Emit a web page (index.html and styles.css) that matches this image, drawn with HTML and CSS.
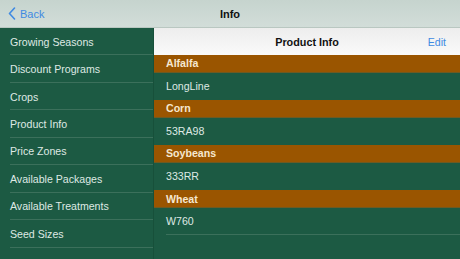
FILE: index.html
```html
<!DOCTYPE html>
<html>
<head>
<meta charset="utf-8">
<link rel="stylesheet" href="styles.css">
</head>
<body>
<div class="app">
  <header class="nav">
    <a class="back">
      <svg class="chev" width="8" height="13" viewBox="0 0 8 13"><path d="M6.5 1 L1.5 6.5 L6.5 12" fill="none" stroke="#3f8ae2" stroke-width="1.6" stroke-linecap="round" stroke-linejoin="round"/></svg>
      <span>Back</span>
    </a>
    <div class="nav-title">Info</div>
  </header>
  <div class="main">
    <nav class="sidebar">
      <div class="side-row">Growing Seasons</div>
      <div class="side-row">Discount Programs</div>
      <div class="side-row">Crops</div>
      <div class="side-row">Product Info</div>
      <div class="side-row">Price Zones</div>
      <div class="side-row">Available Packages</div>
      <div class="side-row">Available Treatments</div>
      <div class="side-row">Seed Sizes</div>
    </nav>
    <section class="detail">
      <div class="detail-head">
        <div class="detail-title">Product Info</div>
        <a class="edit">Edit</a>
      </div>
      <div class="sec-head">Alfalfa</div>
      <div class="row">LongLine</div>
      <div class="sec-head">Corn</div>
      <div class="row">53RA98</div>
      <div class="sec-head">Soybeans</div>
      <div class="row">333RR</div>
      <div class="sec-head">Wheat</div>
      <div class="row last">W760</div>
    </section>
  </div>
</div>
</body>
</html>
```
FILE: styles.css
```css
html, body {
  margin: 0;
  padding: 0;
}
body {
  width: 460px;
  height: 259px;
  overflow: hidden;
  font-family: "Liberation Sans", Arial, sans-serif;
  background: #1c5a43;
}
.app {
  display: flex;
  flex-direction: column;
  height: 259px;
}
.nav {
  height: 28px;
  flex: none;
  position: relative;
  display: flex;
  align-items: center;
  background: linear-gradient(#c6d4ce, #d2ddd9);
  box-sizing: border-box;
  border-bottom: 1px solid #b9c7c1;
}
.back {
  display: flex;
  align-items: center;
  gap: 4px;
  padding-left: 8px;
  color: #3f8ae2;
  font-size: 11px;
}
.chev {
  display: block;
}
.nav-title {
  position: absolute;
  left: 0;
  right: 0;
  text-align: center;
  font-weight: bold;
  font-size: 11px;
  color: #111;
  pointer-events: none;
}
.main {
  flex: 1;
  display: flex;
  min-height: 0;
}
.sidebar {
  width: 153px;
  flex: none;
  background: #1c5a43;
  border-right: 1px solid #17503a;
  display: flex;
  flex-direction: column;
}
.side-row {
  height: 27.45px;
  box-sizing: border-box;
  margin-left: 10px;
  border-bottom: 1px solid #3b705b;
  display: flex;
  align-items: center;
  padding-top: 1px;
  color: #dfe9e4;
  font-size: 10.6px;
}
.detail {
  flex: 1;
  background: #1c5a43;
  display: flex;
  flex-direction: column;
}
.detail-head {
  height: 27px;
  flex: none;
  position: relative;
  display: flex;
  align-items: center;
  justify-content: flex-end;
  background: linear-gradient(#ededed, #fafafa);
  padding-right: 14px;
}
.detail-title {
  position: absolute;
  left: 0;
  right: 0;
  text-align: center;
  font-weight: bold;
  font-size: 10.8px;
  color: #111;
}
.edit {
  position: relative;
  color: #3f8ae2;
  font-size: 10.6px;
}
.sec-head {
  height: 17.5px;
  flex: none;
  box-sizing: border-box;
  background: #9a5500;
  border-bottom: 1px solid #6e5a22;
  display: flex;
  align-items: center;
  padding-left: 12px;
  font-weight: bold;
  font-size: 10.6px;
  color: #f6e7cf;
}
.row {
  height: 27.6px;
  flex: none;
  box-sizing: border-box;
  display: flex;
  align-items: center;
  padding-left: 12px;
  color: #dfe9e4;
  font-size: 10.6px;
}
.row.last {
  margin-left: 12px;
  padding-left: 0;
  border-bottom: 1px solid #3b705b;
}
```
